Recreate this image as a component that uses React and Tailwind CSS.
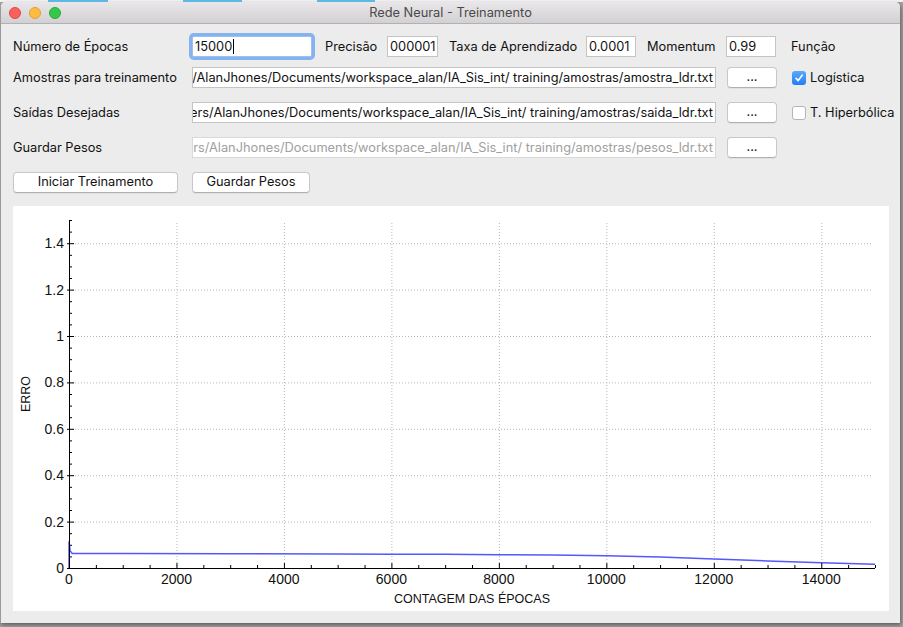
const X0 = 56
const Y0 = 362
const XS = 806 / 15000
const YS = 232
const px = (v) => X0 + v * XS
const py = (v) => Y0 - v * YS

const curve = [
  [0, 0], [0, 0.115], [8, 0.1], [20, 0.075], [60, 0.063], [1000, 0.0622], [3000, 0.0618],
  [5000, 0.0608], [6000, 0.0598], [7000, 0.0588], [8000, 0.0575], [9000, 0.0558],
  [10000, 0.0532], [11000, 0.0472], [12000, 0.0392], [13000, 0.0305], [14000, 0.0228], [15000, 0.0158],
]

const xMajor = [0, 2000, 4000, 6000, 8000, 10000, 12000, 14000]
const yMajor = [0, 0.2, 0.4, 0.6, 0.8, 1, 1.2, 1.4]
const xMinor = Array.from({ length: 31 }, (_, i) => i * 500).filter((v) => v % 2000 !== 0)
const yMinor = Array.from({ length: 31 }, (_, i) => +(i * 0.05).toFixed(2)).filter((v) => Math.round(v * 100) % 20 !== 0)

function Field({ children, muted }) {
  return (
    <div
      className={`shrink-0 w-[524px] h-[21px] bg-white border flex items-center justify-end overflow-hidden whitespace-nowrap px-[2px] ${
        muted ? 'border-[#d9d9d9] text-[#a0a0a0]' : 'border-[#c4c4c4] text-[#111]'
      }`}
    >
      {children}
    </div>
  )
}

function SmallField({ value, className, focus }) {
  return (
    <div
      className={`shrink-0 h-[21px] bg-white border flex items-center pl-[2px] text-[#111] ${className} ${
        focus ? 'ring-[3px] ring-[#85b3ef] rounded-[2px] border-[#9cc0f2]' : 'border-[#c4c4c4]'
      }`}
    >
      {value}
      {focus && <span className="w-px h-[15px] bg-black ml-px" />}
    </div>
  )
}

function Button({ label, className }) {
  return (
    <button
      className={`shrink-0 h-[21px] bg-white rounded-[4px] border border-[#c8c8c8] border-b-[#b0b0b0] shadow-[0_1px_0_rgba(0,0,0,0.05)] text-[12.8px] text-[#111] flex items-center justify-center leading-none ${className}`}
    >
      {label}
    </button>
  )
}

function Check({ checked }) {
  return checked ? (
    <span className="shrink-0 w-[14px] h-[14px] rounded-[3px] bg-gradient-to-b from-[#5aa9fb] to-[#1f7ef5] flex items-center justify-center">
      <svg width="10" height="10" viewBox="0 0 10 10">
        <polyline points="2,5.3 4.2,7.6 8.2,2.2" fill="none" stroke="white" strokeWidth="1.6" strokeLinecap="round" strokeLinejoin="round" />
      </svg>
    </span>
  ) : (
    <span className="shrink-0 w-[14px] h-[14px] rounded-[3px] bg-white border border-[#b5b5b5]" />
  )
}

function Chart() {
  const line = curve.map(([x, y], i) => `${i ? 'L' : 'M'}${px(x).toFixed(2)},${py(y).toFixed(2)}`).join(' ')
  return (
    <svg width="876" height="405" viewBox="0 0 876 405" className="block">
      {xMajor.slice(1).map((v) => (
        <line key={v} x1={px(v) + 0.5} x2={px(v) + 0.5} y1={17} y2={Y0} stroke="#b8b8b8" strokeDasharray="1 2" />
      ))}
      {yMajor.slice(1).map((v) => (
        <line key={v} x1={X0} x2={860} y1={py(v) + 0.5} y2={py(v) + 0.5} stroke="#b8b8b8" strokeDasharray="1 2" />
      ))}
      <path d={line} fill="none" stroke="#5656ff" strokeWidth="1.5" />
      <line x1={X0 + 0.5} x2={X0 + 0.5} y1={14} y2={Y0 + 0.5} stroke="#000" />
      <line x1={X0} x2={862} y1={Y0 + 0.5} y2={Y0 + 0.5} stroke="#000" />
      {xMajor.map((v) => (
        <line key={v} x1={px(v) + 0.5} x2={px(v) + 0.5} y1={Y0 - 5} y2={Y0} stroke="#000" />
      ))}
      {xMinor.map((v) => (
        <line key={v} x1={px(v) + 0.5} x2={px(v) + 0.5} y1={Y0 - 3} y2={Y0} stroke="#000" />
      ))}
      {yMajor.map((v) => (
        <line key={v} x1={X0 - 2} x2={X0 + 5} y1={py(v) + 0.5} y2={py(v) + 0.5} stroke="#000" />
      ))}
      {yMinor.map((v) => (
        <line key={v} x1={X0} x2={X0 + 3} y1={py(v) + 0.5} y2={py(v) + 0.5} stroke="#000" />
      ))}
      <g fontFamily="'Liberation Sans', Arial, sans-serif" fontSize="14" fill="#111">
        {yMajor.map((v) => (
          <text key={v} x={51} y={py(v) + 5} textAnchor="end">
            {String(v)}
          </text>
        ))}
        {xMajor.map((v) => (
          <text key={v} x={px(v)} y={378} textAnchor="middle">
            {v}
          </text>
        ))}
      </g>
      <text x={459} y={397} textAnchor="middle" fontFamily="'Liberation Sans', Arial, sans-serif" fontSize="12.5" fill="#111">
        CONTAGEM DAS ÉPOCAS
      </text>
      <text
        x={17}
        y={188}
        textAnchor="middle"
        transform="rotate(-90 17 188)"
        fontFamily="'Liberation Sans', Arial, sans-serif"
        fontSize="12.5"
        fill="#111"
      >
        ERRO
      </text>
    </svg>
  )
}

export default function App() {
  return (
    <div className="w-[903px] h-[627px] bg-[#a4a4a4] overflow-hidden font-['Inter','Liberation_Sans',sans-serif] text-[12.8px] whitespace-nowrap">
      <div className="h-[2px] bg-[#f4f4f4] flex">
        <span className="ml-[48px] w-[60px] bg-[#5fb7e6]" />
        <span className="ml-[75px] w-[59px] bg-[#5fb7e6]" />
        <span className="ml-[75px] w-[58px] bg-[#5fb7e6]" />
      </div>
      <div className="w-[900px] h-[621px] bg-[#ececec] rounded-t-[5px] border-l border-[#9a9a9a] shadow-[1px_2px_4px_rgba(0,0,0,0.45)] flex flex-col overflow-hidden">
        <div className="h-[22px] shrink-0 bg-gradient-to-b from-[#e9e7e9] to-[#d2d0d2] border-b border-[#b1b1b1] flex items-center">
          <div className="flex gap-[8px] pl-[8px]">
            <span className="w-[12px] h-[12px] rounded-full bg-[#fc605b] border border-[#de4a45]" />
            <span className="w-[12px] h-[12px] rounded-full bg-[#fdbc40] border border-[#dea035]" />
            <span className="w-[12px] h-[12px] rounded-full bg-[#34c84a] border border-[#27aa35]" />
          </div>
          <div className="flex-1 text-center text-[#4a4a4a] -ml-[60px]">Rede Neural - Treinamento</div>
        </div>

        <div className="pl-[12px] pt-[12px] flex flex-col text-[#111]">
          <div className="flex items-center h-[21px] mb-[10px]">
            <span className="shrink-0 w-[179px]">Número de Épocas</span>
            <SmallField value="15000" className="w-[120px]" focus />
            <span className="shrink-0 ml-[13px] w-[62px]">Precisão</span>
            <SmallField value="000001" className="w-[51px]" />
            <span className="shrink-0 ml-[11px] w-[137px]">Taxa de Aprendizado</span>
            <SmallField value="0.0001" className="w-[50px]" />
            <span className="shrink-0 ml-[11px] w-[79px]">Momentum</span>
            <SmallField value="0.99" className="w-[50px]" />
            <span className="shrink-0 ml-[15px]">Função</span>
          </div>

          <div className="flex flex-col gap-[14px]">
            <div className="flex items-center h-[21px]">
              <span className="shrink-0 w-[179px]">Amostras para treinamento</span>
              <Field>/Users/AlanJhones/Documents/workspace_alan/IA_Sis_int/ training/amostras/amostra_ldr.txt</Field>
              <Button label="..." className="ml-[11px] w-[50px]" />
              <span className="shrink-0 ml-[15px] flex items-center gap-[4px]">
                <Check checked />
                Logística
              </span>
            </div>

            <div className="flex items-center h-[21px]">
              <span className="shrink-0 w-[179px]">Saídas Desejadas</span>
              <Field>/Users/AlanJhones/Documents/workspace_alan/IA_Sis_int/ training/amostras/saida_ldr.txt</Field>
              <Button label="..." className="ml-[11px] w-[50px]" />
              <span className="shrink-0 ml-[15px] flex items-center gap-[4px]">
                <Check />
                T. Hiperbólica
              </span>
            </div>

            <div className="flex items-center h-[21px]">
              <span className="shrink-0 w-[179px]">Guardar Pesos</span>
              <Field muted>/Users/AlanJhones/Documents/workspace_alan/IA_Sis_int/ training/amostras/pesos_ldr.txt</Field>
              <Button label="..." className="ml-[11px] w-[50px]" />
            </div>

            <div className="flex items-center h-[21px]">
              <Button label="Iniciar Treinamento" className="w-[165px]" />
              <Button label="Guardar Pesos" className="ml-[14px] w-[118px]" />
            </div>
          </div>

          <div className="mt-[13px] bg-white w-[876px] h-[405px] shrink-0">
            <Chart />
          </div>
        </div>
      </div>
    </div>
  )
}
